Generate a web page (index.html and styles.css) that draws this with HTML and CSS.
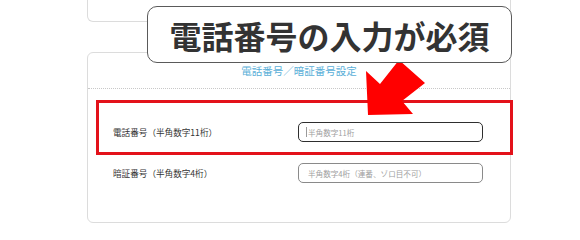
FILE: index.html
```html
<!DOCTYPE html>
<html lang="ja">
<head>
<meta charset="utf-8">
<title>電話番号／暗証番号設定</title>
<link rel="stylesheet" href="styles.css">
</head>
<body>
<div class="page">
  <div class="card card-top"></div>
  <section class="card card-main">
    <header class="card-head">
      <h2 class="card-title">電話番号／暗証番号設定</h2>
    </header>
    <div class="card-body">
      <div class="row">
        <label class="row-label">電話番号（半角数字11桁）</label>
        <div class="field field-focus">
          <input class="text-input" type="text" placeholder="半角数字11桁">
        </div>
      </div>
      <div class="row">
        <label class="row-label">暗証番号（半角数字4桁）</label>
        <div class="field">
          <input class="text-input" type="text" placeholder="半角数字4桁（連番、ゾロ目不可）">
        </div>
      </div>
    </div>
  </section>

  <div class="highlight"></div>
  <svg class="arrow" width="70" height="60" viewBox="360 60 70 60">
    <polygon points="368,115 366,71 380,84 399,60 425,83 402,101 413,114" fill="#ff0000"/>
  </svg>
  <div class="callout">電話番号の入力が必須</div>
</div>
</body>
</html>
```

FILE: styles.css
```css
* { box-sizing: border-box; }
html, body { margin: 0; padding: 0; background: #ffffff; }
body {
  font-family: "Noto Sans CJK JP", "Noto Sans", sans-serif;
  color: #333333;
  width: 580px;
  height: 239px;
  overflow: hidden;
}
.page {
  position: relative;
  width: 580px;
  height: 239px;
  padding-left: 87px;
}
.card {
  width: 424px;
  border: 1px solid #dcdcdc;
  background: #ffffff;
}
.card-top {
  height: 22px;
  border-top: none;
  border-radius: 0 0 6px 6px;
}
.card-main {
  margin-top: 30px;
  height: 171px;
  border-radius: 6px;
  display: flex;
  flex-direction: column;
}
.card-head {
  height: 36px;
  border-bottom: 1px dotted #c8c8c8;
  display: flex;
  align-items: center;
  justify-content: center;
}
.card-title {
  margin: 0;
  font-size: 10.5px;
  font-weight: 400;
  color: #5aafd8;
  line-height: 1;
  padding-top: 1px;
}
.card-body {
  padding: 33px 0 0 25px;
  display: flex;
  flex-direction: column;
  gap: 21px;
}
.row {
  display: flex;
  align-items: center;
  height: 20px;
}
.row-label {
  width: 185px;
  font-size: 8.6px;
  color: #333333;
  line-height: 1;
}
.field {
  position: relative;
  width: 185px;
  height: 20px;
}
.text-input {
  display: block;
  width: 100%;
  height: 100%;
  margin: 0;
  border: 1px solid #8a8a8a;
  border-radius: 5px;
  background: #ffffff;
  padding: 0 0 0 9px;
  font-family: "Noto Sans CJK JP", "Noto Sans", sans-serif;
  font-size: 7.6px;
  color: #333333;
  outline: none;
}
.text-input::placeholder { color: #a0a0a0; }
.field-focus .text-input {
  border: 1.5px solid #2e2e2e;
}
.field-focus::before {
  content: "";
  position: absolute;
  left: 8px;
  top: 5px;
  width: 1px;
  height: 10px;
  background: #9a9a9a;
}
.highlight {
  position: absolute;
  left: 96px;
  top: 100px;
  width: 417px;
  height: 55px;
  border: 3px solid #e3121a;
}
.arrow {
  position: absolute;
  left: 360px;
  top: 60px;
}
.callout {
  position: absolute;
  left: 147px;
  top: 6px;
  width: 365px;
  height: 57px;
  border: 1px solid #5a5a5a;
  border-radius: 10px;
  background: #ffffff;
  display: flex;
  align-items: center;
  justify-content: center;
  font-size: 32px;
  font-weight: 700;
  color: #333333;
  letter-spacing: 0;
  line-height: 1;
}
```
